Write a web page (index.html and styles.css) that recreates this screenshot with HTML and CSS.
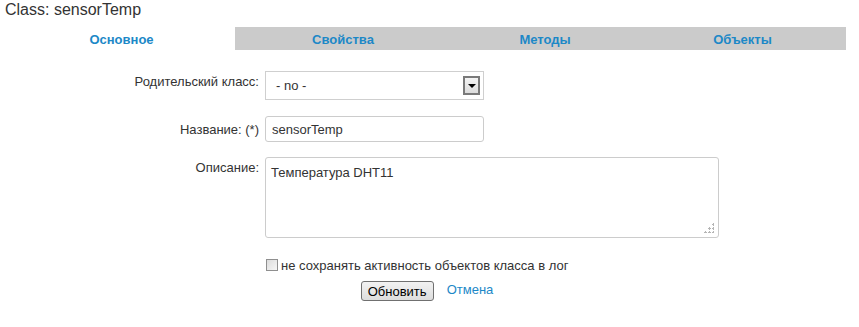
FILE: index.html
```html
<!DOCTYPE html>
<html lang="ru">
<head>
    <meta charset="UTF-8">
    <title>Class: sensorTemp</title>
    <link rel="stylesheet" href="styles.css">
</head>
<body>
    <h1 class="title">Class: sensorTemp</h1>

    <div class="tabs">
        <a class="tab active t1" href="#">Основное</a>
        <a class="tab t2" href="#">Свойства</a>
        <a class="tab t3" href="#">Методы</a>
        <a class="tab t4" href="#">Объекты</a>
    </div>

    <form class="form">
        <label class="lbl lbl-select" for="parent">Родительский класс:</label>
        <div class="field">
            <div class="select">
                <span>- no -</span>
                <span class="arrow"></span>
            </div>
        </div>

        <label class="lbl lbl-input" for="title">Название: (*)</label>
        <div class="field">
            <input type="text" id="title" class="text" value="sensorTemp">
        </div>

        <label class="lbl lbl-area" for="descr">Описание:</label>
        <div class="field">
            <div class="area-wrap">
                <textarea id="descr" class="area">Температура DHT11</textarea>
                <span class="grip"></span>
            </div>
        </div>

        <div class="field check-row">
            <span class="checkbox"></span>
            <span>не сохранять активность объектов класса в лог</span>
        </div>

        <div class="buttons">
            <button type="button" class="btn">Обновить</button>
            <a href="#" class="cancel">Отмена</a>
        </div>
    </form>
</body>
</html>
```

FILE: styles.css
```css
body {
    margin: 0;
    font-family: "Liberation Sans", Arial, sans-serif;
    font-size: 13px;
    color: #333;
    background: #fff;
}
.title {
    margin: 0;
    padding: 1px 0 0 5px;
    height: 26px;
    font-size: 16px;
    font-weight: normal;
    color: #333;
    line-height: 18px;
}
.tabs {
    display: flex;
    margin-left: 8px;
    width: 838px;
    height: 23px;
    background: #cbcbcb;
}
.tab {
    display: block;
    text-align: center;
    line-height: 25px;
    font-weight: bold;
    color: #1c88c7;
    text-decoration: none;
}
.tab.active {
    background: #fff;
}
.t1 { width: 227px; }
.t2 { width: 216px; }
.t3 { width: 188px; }
.t4 { width: 207px; }

.form {
    display: grid;
    grid-template-columns: 259px auto;
    column-gap: 6px;
    margin-top: 21px;
}
.lbl {
    text-align: right;
    padding-top: 3px;
}
.lbl-select { padding-top: 3px; }
.lbl-input { padding-top: 6px; }
.lbl-area { padding-top: 3px; }
.field {
    grid-column: 2;
}
.select {
    box-sizing: border-box;
    width: 219px;
    height: 29px;
    border: 1px solid #cfcfcf;
    display: flex;
    align-items: center;
    justify-content: space-between;
    padding: 0 3px 0 10px;
    margin-bottom: 16px;
    color: #333;
}
.arrow {
    box-sizing: border-box;
    width: 17px;
    height: 19px;
    border: 2px solid #7a7a7a;
    background: linear-gradient(#f4f4f4, #dcdcdc);
    position: relative;
}
.arrow::after {
    content: "";
    position: absolute;
    left: 3px;
    top: 6px;
    border-left: 4px solid transparent;
    border-right: 4px solid transparent;
    border-top: 4px solid #000;
}
.text, .area {
    box-sizing: border-box;
    border: 1px solid #cccccc;
    border-radius: 3px;
    font-family: "Liberation Sans", Arial, sans-serif;
    font-size: 13px;
    color: #333;
    display: block;
    margin: 0;
}
.text {
    width: 219px;
    height: 26px;
    padding: 0 6px;
    margin-bottom: 15px;
}
.area-wrap {
    position: relative;
    width: 454px;
    margin-bottom: 20px;
}
.area {
    width: 454px;
    height: 81px;
    padding: 7px 5px;
    resize: none;
}
/* dotted resize grip */
.grip {
    position: absolute;
    right: 5px;
    bottom: 5px;
    width: 10px;
    height: 10px;
    background:
        radial-gradient(circle, #b5b5b5 1px, transparent 1.2px) 8px 0 / 3px 3px no-repeat,
        radial-gradient(circle, #b5b5b5 1px, transparent 1.2px) 4px 4px / 3px 3px no-repeat,
        radial-gradient(circle, #b5b5b5 1px, transparent 1.2px) 8px 4px / 3px 3px no-repeat,
        radial-gradient(circle, #b5b5b5 1px, transparent 1.2px) 0 8px / 3px 3px no-repeat,
        radial-gradient(circle, #b5b5b5 1px, transparent 1.2px) 4px 8px / 3px 3px no-repeat,
        radial-gradient(circle, #b5b5b5 1px, transparent 1.2px) 8px 8px / 3px 3px no-repeat;
}
.check-row {
    display: flex;
    align-items: center;
    gap: 3px;
    margin-left: 1px;
    height: 14px;
    color: #333;
}
.checkbox {
    box-sizing: border-box;
    width: 12px;
    height: 12px;
    border: 1px solid #8f8f8f;
    background: linear-gradient(135deg, #dcdcdc, #f6f6f6);
}
.buttons {
    grid-column: 1 / span 2;
    display: flex;
    align-items: center;
    justify-content: center;
    gap: 13px;
    margin-top: 9px;
    padding-right: 5px;
}
.btn {
    box-sizing: border-box;
    width: 73px;
    height: 20px;
    padding: 0;
    font-family: "Liberation Sans", Arial, sans-serif;
    font-size: 13px;
    color: #000;
    border: 1px solid #707070;
    border-radius: 3px;
    background: linear-gradient(#f2f2f2, #dddddd);
}
.cancel {
    color: #1c88c7;
    text-decoration: none;
    margin-top: -3px;
}
```
